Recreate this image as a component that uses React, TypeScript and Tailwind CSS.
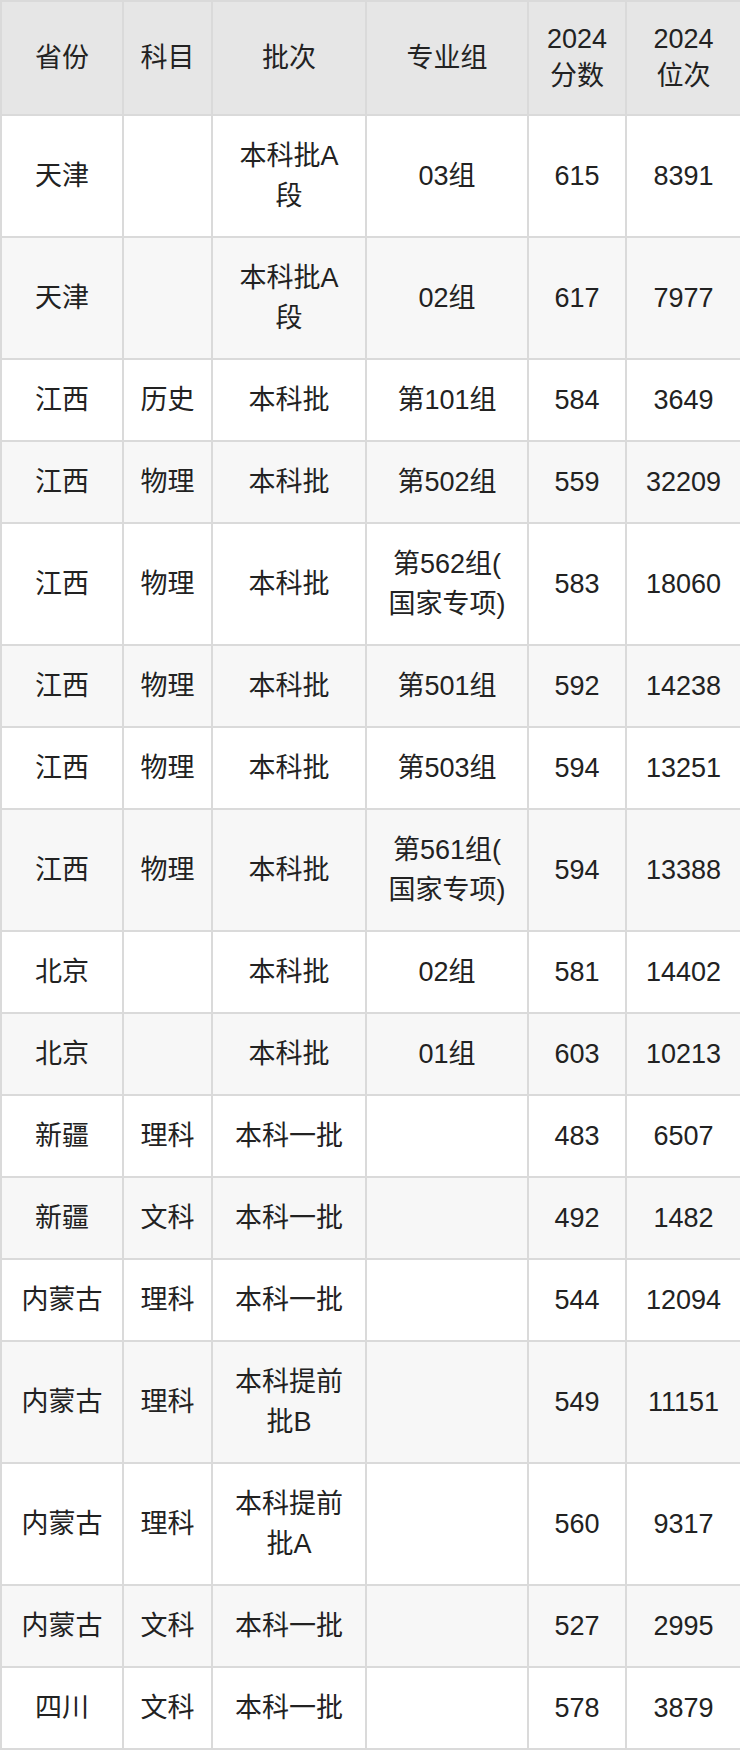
const header: string[][] = [['省份'], ['科目'], ['批次'], ['专业组'], ['2024', '分数'], ['2024', '位次']];

// each cell is a list of lines
const rows: string[][][] = [
    [['天津'], [], ['本科批A', '段'], ['03组'], ['615'], ['8391']],
    [['天津'], [], ['本科批A', '段'], ['02组'], ['617'], ['7977']],
    [['江西'], ['历史'], ['本科批'], ['第101组'], ['584'], ['3649']],
    [['江西'], ['物理'], ['本科批'], ['第502组'], ['559'], ['32209']],
    [['江西'], ['物理'], ['本科批'], ['第562组(', '国家专项)'], ['583'], ['18060']],
    [['江西'], ['物理'], ['本科批'], ['第501组'], ['592'], ['14238']],
    [['江西'], ['物理'], ['本科批'], ['第503组'], ['594'], ['13251']],
    [['江西'], ['物理'], ['本科批'], ['第561组(', '国家专项)'], ['594'], ['13388']],
    [['北京'], [], ['本科批'], ['02组'], ['581'], ['14402']],
    [['北京'], [], ['本科批'], ['01组'], ['603'], ['10213']],
    [['新疆'], ['理科'], ['本科一批'], [], ['483'], ['6507']],
    [['新疆'], ['文科'], ['本科一批'], [], ['492'], ['1482']],
    [['内蒙古'], ['理科'], ['本科一批'], [], ['544'], ['12094']],
    [['内蒙古'], ['理科'], ['本科提前', '批B'], [], ['549'], ['11151']],
    [['内蒙古'], ['理科'], ['本科提前', '批A'], [], ['560'], ['9317']],
    [['内蒙古'], ['文科'], ['本科一批'], [], ['527'], ['2995']],
    [['四川'], ['文科'], ['本科一批'], [], ['578'], ['3879']],
];

function Lines({ lines }: { lines: string[] }) {
    return (
        <>
            {lines.map((l, i) => (
                <div key={i}>{l}</div>
            ))}
        </>
    );
}

export default function App() {
    return (
        <div className="w-[740px] bg-white font-['Liberation_Sans','Noto_Sans_CJK_SC',sans-serif] text-[27px] text-[#222]">
            <table className="w-[740px] table-fixed border-collapse border-2 border-[#dadada] text-center">
                <colgroup>
                    <col className="w-[122px]" />
                    <col className="w-[89px]" />
                    <col className="w-[154px]" />
                    <col className="w-[162px]" />
                    <col className="w-[98px]" />
                    <col className="w-[115px]" />
                </colgroup>
                <thead>
                    <tr className="bg-[#e6e6e6]">
                        {header.map((h, i) => (
                            <th key={i} className="border-2 border-[#dadada] px-2 py-[19px] font-normal leading-[37px]">
                                <Lines lines={h} />
                            </th>
                        ))}
                    </tr>
                </thead>
                <tbody>
                    {rows.map((r, ri) => (
                        <tr key={ri} className={ri % 2 === 1 ? 'bg-[#f7f7f7]' : 'bg-white'}>
                            {r.map((c, ci) => (
                                <td key={ci} className="border-2 border-[#dadada] px-2 py-5 leading-[40px]">
                                    {c.length ? <Lines lines={c} /> : <div className="h-[40px]" />}
                                </td>
                            ))}
                        </tr>
                    ))}
                </tbody>
            </table>
        </div>
    );
}
